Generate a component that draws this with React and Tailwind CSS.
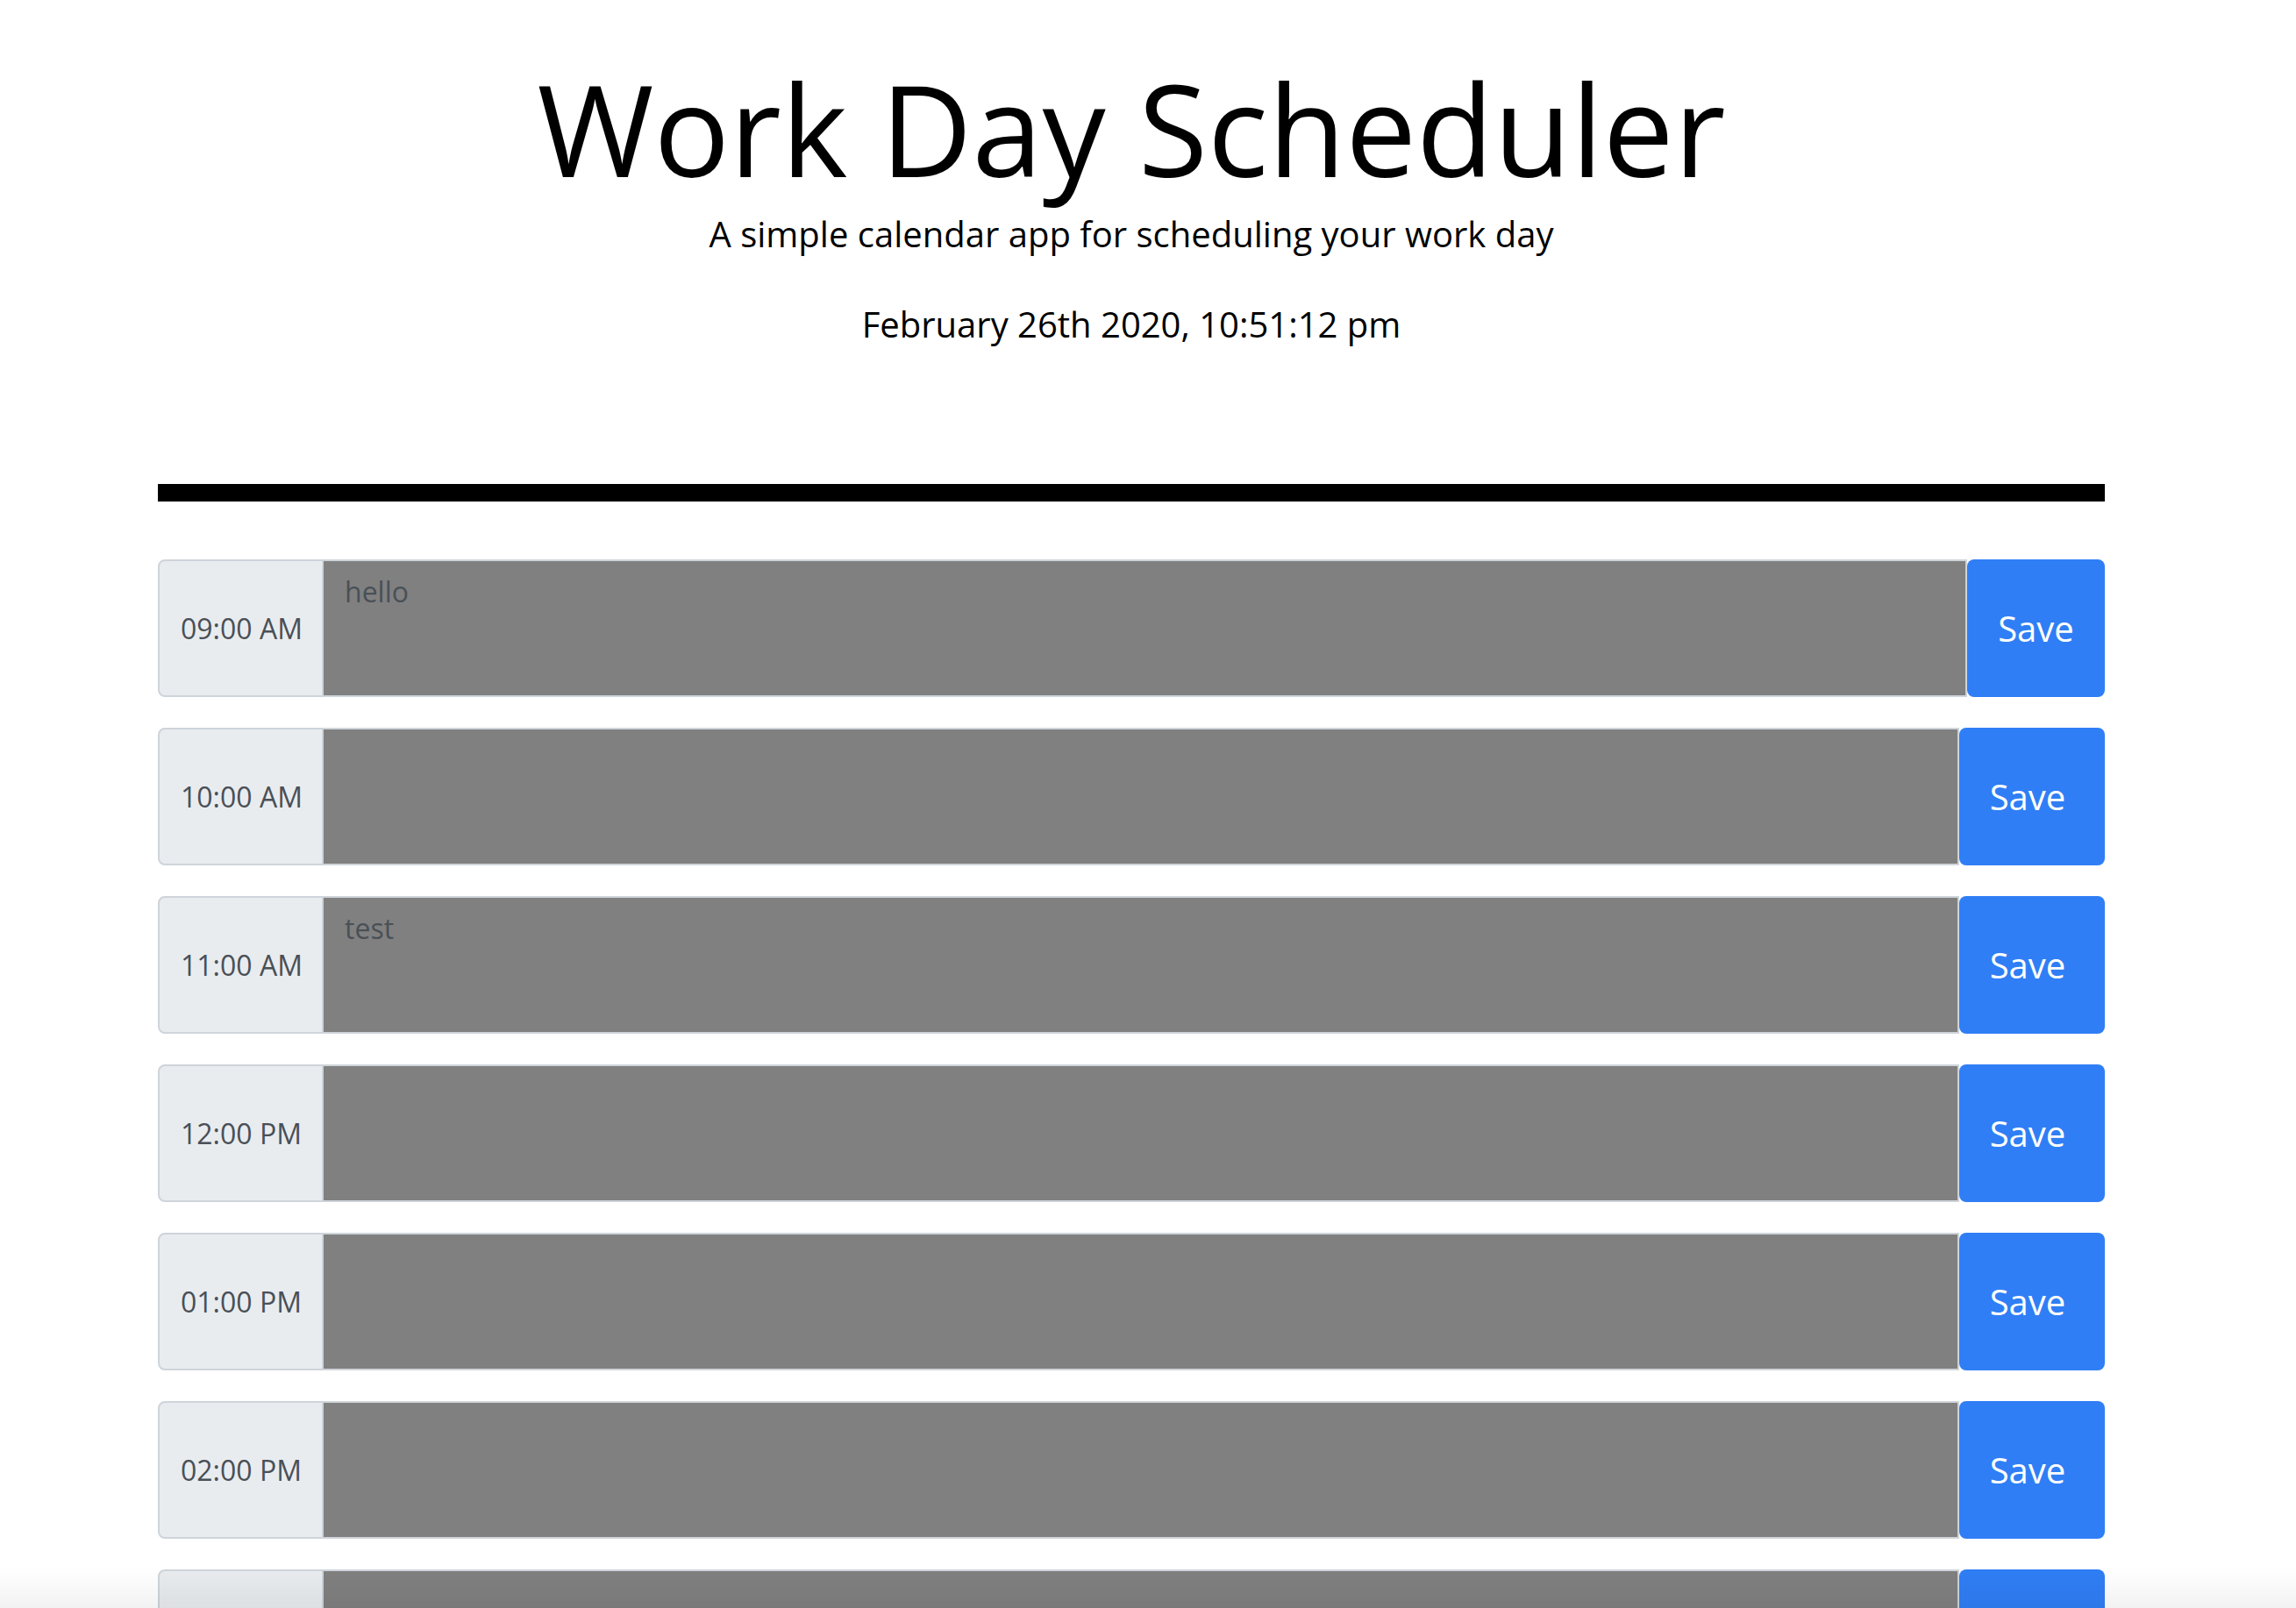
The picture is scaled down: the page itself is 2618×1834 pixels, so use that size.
import { useState } from "react";

const hours = [
  { label: "09:00 AM", text: "hello", btn: "w-[157px]" },
  { label: "10:00 AM", text: "", btn: "w-[166px] pr-[10px]" },
  { label: "11:00 AM", text: "test", btn: "w-[166px] pr-[10px]" },
  { label: "12:00 PM", text: "", btn: "w-[166px] pr-[10px]" },
  { label: "01:00 PM", text: "", btn: "w-[166px] pr-[10px]" },
  { label: "02:00 PM", text: "", btn: "w-[166px] pr-[10px]" },
  { label: "03:00 PM", text: "", btn: "w-[166px] pr-[10px]" },
  { label: "04:00 PM", text: "", btn: "w-[166px] pr-[10px]" },
  { label: "05:00 PM", text: "", btn: "w-[166px] pr-[10px]" },
];

function HourRow({ hour }) {
  const [value, setValue] = useState(hour.text);

  return (
    <div className="flex h-[157px]">
      {/* Time label */}
      <div className="flex w-[189px] shrink-0 items-center rounded-l-[8px] border-2 border-[#ced4da] bg-[#e9ecef] pl-[24px] text-[32px] leading-[48px] text-[#495057]">
        {hour.label}
      </div>

      {/* Description */}
      <textarea
        value={value}
        onChange={(e) => setValue(e.target.value)}
        className="min-w-0 flex-1 resize-none border-2 border-l-0 border-[#ced4da] bg-[#808080] px-[24px] py-[11px] text-[32px] leading-[48px] text-[#495057] outline-none"
      />

      {/* Save */}
      <button
        className={`${hour.btn} shrink-0 rounded-[8px] bg-[#307ef5] text-[40px] leading-[60px] text-white`}
      >
        Save
      </button>
    </div>
  );
}

export default function App() {
  return (
    <div className="min-h-screen w-[2580px] bg-white font-['Open_Sans',sans-serif] text-black">
      <div className="mx-auto w-[2220px]">
        <header className="flex flex-col items-center pt-[60px] text-center">
          <h1 className="text-[144px] font-normal leading-[173px]">Work Day Scheduler</h1>
          <p className="mt-[4px] text-[40px] leading-[60px]">
            A simple calendar app for scheduling your work day
          </p>
          <p className="mt-[43px] text-[40px] leading-[60px]">February 26th 2020, 10:51:12 pm</p>
        </header>

        <div className="mt-[152px] h-[20px] bg-black" />

        <div className="mt-[66px] flex flex-col gap-[35px] pb-[60px]">
          {hours.map((hour) => (
            <HourRow key={hour.label} hour={hour} />
          ))}
        </div>
      </div>

      {/* faint fade at the bottom of the window */}
      <div className="pointer-events-none fixed bottom-0 left-0 right-0 h-[46px] bg-linear-to-b from-transparent to-black/[0.05]" />
    </div>
  );
}
